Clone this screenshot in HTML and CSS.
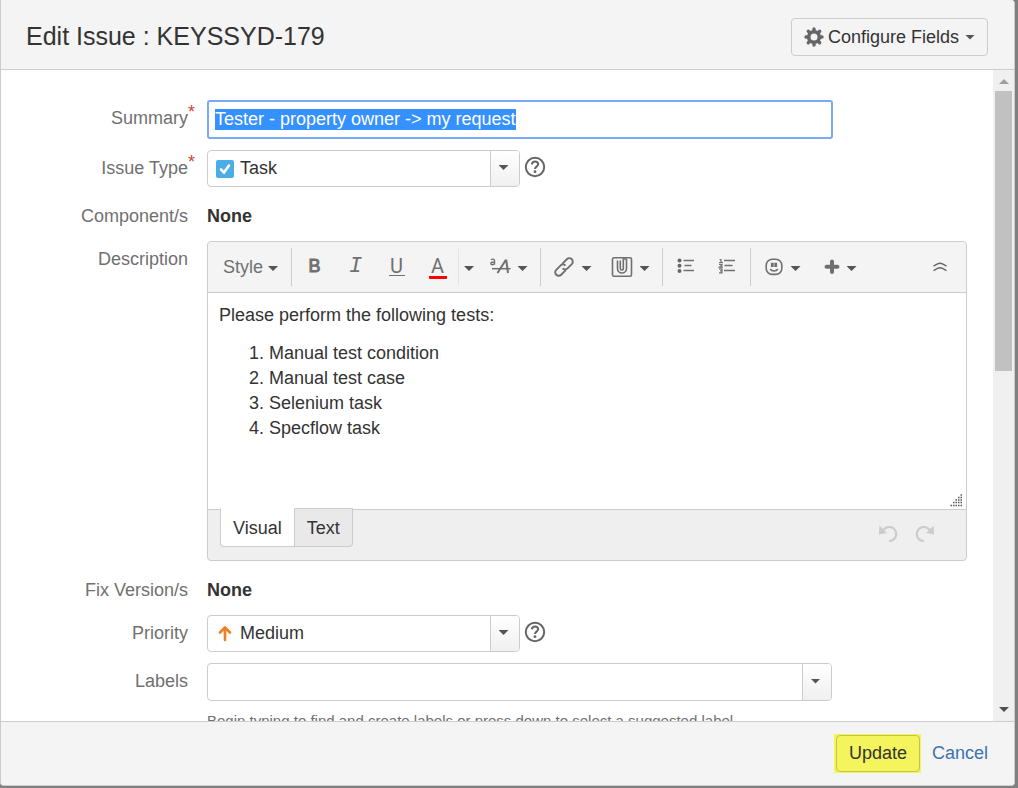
FILE: index.html
```html
<!DOCTYPE html>
<html lang="en">
<head>
  <meta charset="UTF-8" />
  <meta name="viewport" content="width=device-width, initial-scale=1.0" />
  <title>Edit Issue : KEYSSYD-179</title>
  <link rel="stylesheet" href="styles.css">
</head>
<body>
  <div class="dialog" role="dialog" aria-labelledby="dialog-title">
    <header class="dialog-header">
      <h1 id="dialog-title">Edit Issue : KEYSSYD-179</h1>
      <button type="button" class="configure">
        <svg width="20" height="20" viewBox="0 0 20 20"><circle cx="10" cy="10" r="5.3" fill="none" stroke="#666" stroke-width="3.6"/><g stroke="#666" stroke-width="3.4" stroke-linecap="round"><path d="M10 2v1M10 17v1M2 10h1M17 10h1M4.3 4.3l1 1M14.7 14.7l1 1M15.7 4.3l-1 1M5.3 14.7l-1 1"/></g></svg>
        Configure Fields
        <span class="caret"></span>
      </button>
    </header>

    <div class="dialog-main">
      <form class="form" id="edit-form">
        <div class="row">
          <label for="summary">Summary<span class="required">*</span></label>
          <input type="text" id="summary" class="summary" value="Tester - property owner -&gt; my request" autofocus>
        </div>

        <div class="row">
          <label for="issue-type">Issue Type<span class="required">*</span></label>
          <div class="field">
            <div class="combo">
              <svg width="18" height="18" viewBox="0 0 18 18"><rect width="18" height="18" rx="2" fill="#4bade8"/><path d="M5 9.5l3 3 5-7" fill="none" stroke="#fff" stroke-width="2.6" stroke-linecap="round"/></svg>
              <select id="issue-type"><option>Task</option></select>
              <span class="drop"><span class="caret"></span></span>
            </div>
            <button type="button" class="help" aria-label="Issue type help">
              <svg width="22" height="22" viewBox="0 0 22 22" fill="none" stroke="#666" stroke-width="2"><circle cx="11" cy="11" r="9.2"/><path d="M7.9 8.4c.2-1.8 1.4-2.8 3.1-2.8 1.8 0 3.1 1.1 3.1 2.7 0 2.3-3.1 2.4-3.1 4.7"/><circle cx="11" cy="15.7" r="1.4" fill="#666" stroke="none"/></svg>
            </button>
          </div>
        </div>

        <div class="row text-row">
          <span class="label">Component/s</span>
          <strong>None</strong>
        </div>

        <div class="row">
          <label for="description">Description</label>
          <div class="editor">
            <div class="toolbar">
              <div class="group style-group">
                <button type="button" class="style-button">Style <span class="caret"></span></button>
              </div>
              <div class="group">
                <button type="button" class="tool bold">B</button>
                <button type="button" class="tool italic">I</button>
                <button type="button" class="tool underline"><span>U</span></button>
                <button type="button" class="tool color"><span>A</span></button>
                <button type="button" class="color-drop" aria-label="More colours"><span class="caret"></span></button>
                <button type="button" class="tool-menu" aria-label="More formatting">
                  <svg width="22" height="22" viewBox="0 0 22 22" fill="none" stroke="#707070"><path d="M8.500 17L16.500 4.500h.8L19 17" stroke-width="2"/><path d="M3 12.700h18.500" stroke-width="1.500"/><path d="M2 3.700c1.200-1 3.500-.8 3.500 1v4M5.500 6C3.200 5.900 1.800 6.300 1.800 7.500c0 1.600 2.700 1.500 3.700.1" stroke-width="1.400"/></svg>
                  <span class="caret"></span>
                </button>
              </div>
              <div class="group">
                <button type="button" class="tool-menu" aria-label="Link">
                  <svg width="22" height="22" viewBox="0 0 22 22" fill="none" stroke="#707070" stroke-width="1.900"><g transform="rotate(-45 11 11)"><path d="M10 14.500H3.500a3.500 3.500 0 0 1 0-7H9.500a3.500 3.500 0 0 1 3.500 3.500"/><path d="M12 7.500h6.500a3.500 3.500 0 0 1 0 7H12.500A3.500 3.500 0 0 1 9 11"/></g></svg>
                  <span class="caret"></span>
                </button>
                <button type="button" class="tool-menu" aria-label="Attachment">
                  <svg width="22" height="22" viewBox="0 0 22 22" fill="none" stroke="#707070" stroke-width="1.600"><rect x="1.500" y="1.700" width="19" height="18.500" rx="1.500"/><path d="M6.500 4.500v8a4.500 4.500 0 0 0 9 0V3M15.500 3h-3.200v9.500a1.500 1.500 0 0 1-3 0V4.500"/></svg>
                  <span class="caret"></span>
                </button>
              </div>
              <div class="group">
                <button type="button" class="tool" aria-label="Bullet list">
                  <svg width="18" height="16" viewBox="0 0 18 16"><g fill="#666"><circle cx="2.500" cy="2.500" r="2"/><circle cx="2.500" cy="7.700" r="2"/><circle cx="2.500" cy="13" r="2"/></g><path d="M6.500 2.500H17M7.500 7.500h7M6.500 12.500H17" stroke="#707070" stroke-width="1.300"/></svg>
                </button>
                <button type="button" class="tool" aria-label="Numbered list">
                  <svg width="18" height="16" viewBox="0 0 18 16" fill="none" stroke="#707070" stroke-width="1.300"><path d="M6 2.500h11M6.500 7.500h8M6 12.500h11"/><path d="M1.500 1.500h1.500v3M1 4.500h4M1 6.300h3v1L1.500 9.200H5M1 10.900h3v4H1M2 12.900h2" stroke-width="1.200"/></svg>
                </button>
              </div>
              <div class="group last">
                <button type="button" class="tool-menu" aria-label="Emoji">
                  <svg width="20" height="20" viewBox="0 0 20 20" fill="none" stroke="#707070" stroke-width="1.600"><rect x="2.200" y="2.200" width="15.600" height="15.200" rx="6"/><path d="M8.300 5.800v4.200M11.700 5.800v4.200" stroke-width="2.800"/><path d="M6.200 12c1.700 2.600 6 2.600 7.600 0"/></svg>
                  <span class="caret"></span>
                </button>
                <button type="button" class="tool-menu" aria-label="Insert">
                  <svg width="16" height="16" viewBox="0 0 16 16"><path d="M8 2.500v10.500M2.500 7.700h11" stroke="#707070" stroke-width="4" stroke-linecap="round"/></svg>
                  <span class="caret"></span>
                </button>
              </div>
              <button type="button" class="collapse" aria-label="Collapse toolbar">
                <svg width="14" height="10" viewBox="0 0 14 10" fill="none" stroke="#666" stroke-width="1.400"><path d="M.5 4.200L4.500 1.800Q7 .6 9.500 1.800L13.500 4.200M.5 8.700L4.500 6.300Q7 5.100 9.500 6.300L13.500 8.700"/></svg>
              </button>
            </div>

            <div class="content" id="description" contenteditable="true" role="textbox" aria-label="Description">
              <p>Please perform the following tests:</p>
              <ol>
                <li>Manual test condition</li>
                <li>Manual test case</li>
                <li>Selenium task</li>
                <li>Specflow task</li>
              </ol>
            </div>

            <div class="editor-footer">
              <svg class="grip" width="13" height="13" viewBox="0 0 13 13" stroke="#555" stroke-dasharray="1.500 1" stroke-width="1.300"><path d="M10.500 1H12M8 3.500h4M5.500 6H12M3 8.500h9M.5 11.500H12"/></svg>
              <div class="tabs">
                <button type="button" class="tab active">Visual</button>
                <button type="button" class="tab">Text</button>
              </div>
              <div class="history">
                <button type="button" aria-label="Undo" disabled>
                  <svg width="20" height="20" viewBox="0 0 20 20"><path d="M4.500 8A7 7 0 1 1 11 17" fill="none" stroke="#ccc" stroke-width="2.200"/><path d="M1.500 1.500L.8 10.500l8-1.500z" fill="#ccc"/></svg>
                </button>
                <button type="button" aria-label="Redo" disabled>
                  <svg width="20" height="20" viewBox="0 0 20 20"><path d="M15.500 8A7 7 0 1 0 9 17" fill="none" stroke="#ccc" stroke-width="2.200"/><path d="M18.500 1.500l.7 9-8-1.500z" fill="#ccc"/></svg>
                </button>
              </div>
            </div>
          </div>
        </div>

        <div class="row text-row">
          <span class="label">Fix Version/s</span>
          <strong>None</strong>
        </div>

        <div class="row">
          <label for="priority">Priority</label>
          <div class="field">
            <div class="combo">
              <svg width="18" height="18" viewBox="0 0 18 18"><path d="M9 15V3M4 7.500L9 2.500l5 5" fill="none" stroke="#f0801f" stroke-width="2.600" stroke-linecap="round" stroke-linejoin="round"/></svg>
              <select id="priority"><option>Medium</option></select>
              <span class="drop"><span class="caret"></span></span>
            </div>
            <button type="button" class="help" aria-label="Priority help">
              <svg width="22" height="22" viewBox="0 0 22 22" fill="none" stroke="#666" stroke-width="2"><circle cx="11" cy="11" r="9.2"/><path d="M7.9 8.4c.2-1.8 1.4-2.8 3.1-2.8 1.8 0 3.1 1.1 3.1 2.7 0 2.3-3.1 2.4-3.1 4.7"/><circle cx="11" cy="15.7" r="1.4" fill="#666" stroke="none"/></svg>
            </button>
          </div>
        </div>

        <div class="row">
          <label for="labels">Labels</label>
          <div>
            <div class="combo wide">
              <input type="text" id="labels">
              <button type="button" class="drop" aria-label="Show labels"><span class="caret"></span></button>
            </div>
            <p class="hint">Begin typing to find and create labels or press down to select a suggested label.</p>
          </div>
        </div>
      </form>

      <div class="scrollbar" aria-hidden="true">
        <span class="scroll-up"></span>
        <div class="scroll-track"><div class="scroll-thumb"></div></div>
        <span class="scroll-down"></span>
      </div>
    </div>

    <footer class="dialog-footer">
      <button type="submit" form="edit-form" class="update"><span>Update</span></button>
      <a href="#" class="cancel">Cancel</a>
    </footer>
  </div>

  <script>
    const summary = document.getElementById('summary');
    summary.focus();
    summary.select();
  </script>
</body>
</html>
```

FILE: styles.css
```css
* {
  box-sizing: border-box;
  margin: 0;
  padding: 0;
}
body {
  height: 100vh;
  padding: 0 3px 2px 0;
  background: #808080;
  color: #333;
  font-family: "Liberation Sans", Arial, sans-serif;
  font-size: 18px;
  line-height: 25px;
}
button, input, select {
  font: inherit;
  color: inherit;
  border: none;
  background: none;
  outline: none;
}
button {
  cursor: pointer;
}
svg {
  display: block;
  flex: none;
}
.dialog {
  display: flex;
  flex-direction: column;
  height: 100%;
  border: 1px solid #ccc;
  border-top: none;
  border-radius: 0 4px 4px 4px;
  background: #fff;
  overflow: hidden;
}
.dialog-header {
  display: flex;
  align-items: center;
  justify-content: space-between;
  padding: 18px 26px 13px 25px;
  background: #f4f4f4;
  border-bottom: 1px solid #ccc;
}
.dialog-header h1 {
  padding-bottom: 2px;
  font-size: 25px;
  font-weight: normal;
  line-height: 36px;
}
.configure {
  display: flex;
  align-items: center;
  gap: 4px;
  height: 38px;
  padding: 0 12px;
  border: 1px solid #ccc;
  border-radius: 4px;
}
.caret {
  flex: none;
  width: 10px;
  height: 5px;
  background: #555;
  clip-path: polygon(0 0, 100% 0, 50% 100%);
}
.configure .caret {
  margin-left: 2px;
}
.dialog-main {
  display: flex;
  flex: 1;
  min-height: 0;
}
.form {
  display: flex;
  flex-direction: column;
  flex: 1;
  gap: 11px;
  padding: 30px 26px 0 0;
  overflow: hidden;
}
.row {
  display: grid;
  flex: none;
  grid-template-columns: 187px minmax(0, 1fr);
  column-gap: 19px;
}
.row label,
.row .label {
  position: relative;
  padding-top: 6px;
  color: #707070;
  text-align: right;
}
.required {
  position: absolute;
  top: 0;
  right: -7px;
  color: #d04437;
}
.text-row {
  min-height: 32px;
  padding-top: 6px;
}
.text-row .label {
  padding-top: 0;
}
.summary {
  width: 626px;
  max-width: 100%;
  height: 39px;
  padding: 0 6px;
  border: 2px solid #7aaaf5;
  border-radius: 3px;
}
.summary::selection {
  background: rgba(51, 144, 255, 0.99);
  color: #fff;
}
.field {
  display: flex;
  align-items: center;
  gap: 4px;
}
.combo {
  display: flex;
  align-items: center;
  width: 313px;
  height: 37px;
  padding-left: 8px;
  border: 1px solid #ccc;
  border-radius: 4px;
  overflow: hidden;
}
.combo.wide {
  width: 625px;
  max-width: 100%;
  height: 38px;
}
.combo select,
.combo input {
  flex: 1;
  min-width: 0;
  height: 100%;
  padding-left: 6px;
  appearance: none;
}
.drop {
  display: flex;
  align-items: center;
  justify-content: center;
  width: 29px;
  height: 100%;
  padding: 0 3px 2px 0;
  border-left: 1px solid #ccc;
  background: linear-gradient(#fff, #f0f0f0);
  pointer-events: none;
}
button.drop {
  pointer-events: auto;
}
.help {
  margin-bottom: 4px;
}
.editor {
  border: 1px solid #ccc;
  border-radius: 4px;
  background: #efefef;
}
.toolbar {
  display: flex;
  align-items: center;
  height: 51px;
  border-bottom: 1px solid #ccc;
  border-radius: 4px 4px 0 0;
  background: #f4f4f4;
  color: #707070;
}
.group {
  display: flex;
  align-items: center;
  height: 38px;
  padding: 0 3px 0 2px;
  border-right: 1px solid #ccc;
}
.group.style-group {
  padding: 0;
}
.group.last {
  border-right: none;
}
.style-button {
  display: flex;
  align-items: center;
  gap: 5px;
  padding: 0 13px 0 15px;
}
.tool {
  display: flex;
  align-items: center;
  justify-content: center;
  width: 41px;
  height: 36px;
  padding-bottom: 2px;
  font-size: 20px;
}
.bold {
  -webkit-text-stroke: 1px #707070;
  font-size: 18px;
}
.italic {
  font-family: "Liberation Mono", monospace;
  font-size: 22px;
  font-style: italic;
}
.underline span {
  width: 16px;
  border-bottom: 1px solid #707070;
  font-family: Roboto, sans-serif;
  line-height: 18px;
}
.color span {
  width: 18px;
  border-bottom: 3px solid #f00;
  border-radius: 1px;
  font-family: Roboto, sans-serif;
  line-height: 20px;
}
.tool.color {
  padding-bottom: 0;
}
.color-drop {
  display: flex;
  align-items: center;
  justify-content: center;
  width: 21px;
  height: 36px;
  border-left: 1px solid #e4e4e4;
}
.tool-menu {
  display: flex;
  align-items: center;
  justify-content: center;
  gap: 7px;
  width: 58px;
  height: 36px;
}
.tool-menu svg {
  margin-bottom: 1px;
}
.tool-menu .caret,
.color-drop .caret,
.style-button .caret {
  margin-top: 3px;
}
.collapse {
  margin-left: auto;
  padding: 0 19px;
}
.content {
  min-height: 216px;
  padding: 10px 11px;
  background: #fff;
  outline: none;
}
.content ol {
  margin-top: 13px;
  padding-left: 50px;
}
.editor-footer {
  position: relative;
  display: flex;
  justify-content: space-between;
  height: 51px;
  padding: 0 31px 0 12px;
  border-top: 1px solid #ccc;
}
.grip {
  position: absolute;
  right: 3px;
  bottom: 53px;
}
.tabs {
  display: flex;
  height: 39px;
  margin-top: -2px;
}
.tab {
  padding: 1px 12px 0;
  border: 1px solid #ccc;
  border-left: none;
  border-radius: 0 0 4px 0;
  background: #e9e9e9;
}
.tab.active {
  border-top-color: #fff;
  border-left: 1px solid #ccc;
  border-radius: 0 0 0 4px;
  background: #fff;
}
.history {
  display: flex;
  align-items: center;
  gap: 17px;
  padding-bottom: 2px;
}
.hint {
  margin-top: 9px;
  color: #707070;
  font-size: 15px;
  line-height: 21px;
}
.scrollbar {
  display: flex;
  flex-direction: column;
  width: 21px;
  background: #f0f0f0;
}
.scroll-up,
.scroll-down {
  width: 10px;
  height: 5px;
  margin: 9px 6px 7px;
  background: #a0a0a0;
  clip-path: polygon(50% 0, 100% 100%, 0 100%);
}
.scroll-down {
  margin: 7px 6px 9px;
  background: #505050;
  clip-path: polygon(0 0, 100% 0, 50% 100%);
}
.scroll-track {
  flex: 1;
  padding: 0 2px;
}
.scroll-thumb {
  height: 46%;
  background: #c1c1c1;
}
.dialog-footer {
  display: flex;
  align-items: center;
  justify-content: flex-end;
  gap: 11px;
  height: 64px;
  padding: 0 26px 0 0;
  border-top: 1px solid #ccc;
  background: #f4f4f4;
}
.update {
  padding: 1px 1px 1px 2px;
  background: #f4f45c;
}
.update span {
  display: block;
  padding: 5px 12px;
  border: 1px solid #c4c44a;
  border-radius: 4px;
}
.cancel {
  color: #3b73af;
  text-decoration: none;
}
```
